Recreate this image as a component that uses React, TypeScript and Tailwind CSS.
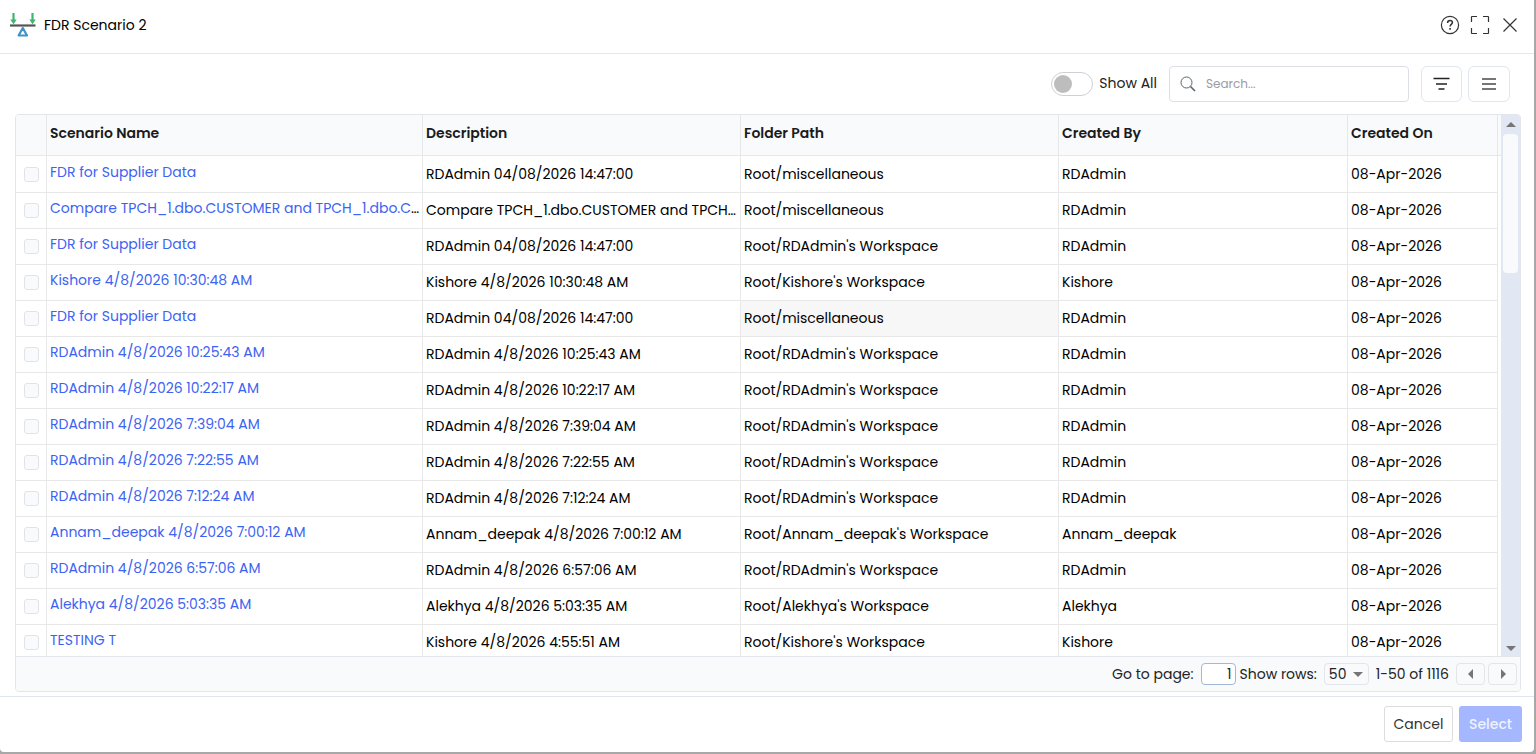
import { useState } from "react";

type Row = {
  name: string;
  description: string;
  folder: string;
  createdBy: string;
};

const compare = "Compare TPCH_1.dbo.CUSTOMER and TPCH_1.dbo.CUSTOMER_COPY";

const rows: Row[] = [
  { name: "FDR for Supplier Data", description: "RDAdmin 04/08/2026 14:47:00", folder: "Root/miscellaneous", createdBy: "RDAdmin" },
  { name: compare, description: compare, folder: "Root/miscellaneous", createdBy: "RDAdmin" },
  { name: "FDR for Supplier Data", description: "RDAdmin 04/08/2026 14:47:00", folder: "Root/RDAdmin's Workspace", createdBy: "RDAdmin" },
  { name: "Kishore 4/8/2026 10:30:48 AM", description: "Kishore 4/8/2026 10:30:48 AM", folder: "Root/Kishore's Workspace", createdBy: "Kishore" },
  { name: "FDR for Supplier Data", description: "RDAdmin 04/08/2026 14:47:00", folder: "Root/miscellaneous", createdBy: "RDAdmin" },
  { name: "RDAdmin 4/8/2026 10:25:43 AM", description: "RDAdmin 4/8/2026 10:25:43 AM", folder: "Root/RDAdmin's Workspace", createdBy: "RDAdmin" },
  { name: "RDAdmin 4/8/2026 10:22:17 AM", description: "RDAdmin 4/8/2026 10:22:17 AM", folder: "Root/RDAdmin's Workspace", createdBy: "RDAdmin" },
  { name: "RDAdmin 4/8/2026 7:39:04 AM", description: "RDAdmin 4/8/2026 7:39:04 AM", folder: "Root/RDAdmin's Workspace", createdBy: "RDAdmin" },
  { name: "RDAdmin 4/8/2026 7:22:55 AM", description: "RDAdmin 4/8/2026 7:22:55 AM", folder: "Root/RDAdmin's Workspace", createdBy: "RDAdmin" },
  { name: "RDAdmin 4/8/2026 7:12:24 AM", description: "RDAdmin 4/8/2026 7:12:24 AM", folder: "Root/RDAdmin's Workspace", createdBy: "RDAdmin" },
  { name: "Annam_deepak 4/8/2026 7:00:12 AM", description: "Annam_deepak 4/8/2026 7:00:12 AM", folder: "Root/Annam_deepak's Workspace", createdBy: "Annam_deepak" },
  { name: "RDAdmin 4/8/2026 6:57:06 AM", description: "RDAdmin 4/8/2026 6:57:06 AM", folder: "Root/RDAdmin's Workspace", createdBy: "RDAdmin" },
  { name: "Alekhya 4/8/2026 5:03:35 AM", description: "Alekhya 4/8/2026 5:03:35 AM", folder: "Root/Alekhya's Workspace", createdBy: "Alekhya" },
  { name: "TESTING T", description: "Kishore 4/8/2026 4:55:51 AM", folder: "Root/Kishore's Workspace", createdBy: "Kishore" },
];

const headCell = "h-10 border-b border-r border-[#e5e7eb] bg-[#f8fafc] px-[3px] pb-1 text-left font-semibold text-[#1b1b1b]";
const cell = "truncate border-b border-r border-[#e8e8e8] pl-[3px] text-black";
const bodyCell = `${cell} pr-[3px] pb-0.5`;

function BalanceLogo() {
  return (
    <svg width="26" height="26" viewBox="0 0 26 26" fill="none" aria-hidden="true">
      <path d="M3.500 1v8M22.500 1v8" stroke="#3fb56f" strokeWidth="2.200" />
      <path d="M.3 7.500 3.500 12.300l3.200-4.800zM19.300 7.500l3.200 4.800 3.200-4.800z" fill="#3fb56f" />
      <path d="M0 13.500h25.500" stroke="#555" strokeWidth="2.200" />
      <path d="M12.800 16 17 23.500H8.600z" stroke="#3f93c9" strokeWidth="2.200" strokeLinejoin="round" />
    </svg>
  );
}

function HelpIcon() {
  return (
    <svg width="20" height="20" viewBox="0 0 20 20" fill="none" stroke="#333" aria-hidden="true">
      <circle cx="10" cy="10" r="8.600" strokeWidth="1.200" />
      <path d="M7.600 7.900C7.600 6.300 8.600 5.500 10 5.500s2.400.9 2.400 2.100c0 1.800-2.300 1.900-2.300 4" strokeWidth="1.500" />
      <path d="M10.100 13v1.700" strokeWidth="1.600" />
    </svg>
  );
}

function ExpandIcon() {
  return (
    <svg width="20" height="20" viewBox="0 0 20 20" fill="none" stroke="#333" strokeWidth="1.200" aria-hidden="true">
      <path d="M1.500 7V2q0-.5.5-.5h5M13 1.500h5q.5 0 .5.5v5M18.500 13v5q0 .5-.5.5h-5M7 18.500H2q-.5 0-.5-.5v-5" />
    </svg>
  );
}

function CloseIcon() {
  return (
    <svg width="20" height="20" viewBox="0 0 20 20" fill="none" stroke="#333" strokeWidth="1.200" aria-hidden="true">
      <path d="m3.500 3.500 13 13M16.500 3.500l-13 13" />
    </svg>
  );
}

function Triangle({ dir }: { dir: "up" | "down" | "left" | "right" }) {
  const d = {
    up: "M0 7 5 2l5 5z",
    down: "M0 3h10L5 8z",
    left: "M7 0v10L2 5z",
    right: "M3 0v10l5-5z",
  }[dir];
  return (
    <svg width="10" height="10" viewBox="0 0 10 10" fill="#757575" aria-hidden="true">
      <path d={d} />
    </svg>
  );
}

export default function App() {
  const [showAll, setShowAll] = useState(false);

  return (
    <div className="h-screen overflow-hidden bg-[#a8a8a8] pr-0.5 pb-0.5 font-[Poppins,Inter,sans-serif] text-sm text-[#222]">
      <div role="dialog" aria-labelledby="dialog-title" className="flex h-full flex-col rounded-b bg-white">
        <header className="flex h-[54px] shrink-0 items-center justify-between border-b border-[#e5e7eb] pr-3.5 pb-1 pl-[10px]">
          <div className="flex items-center gap-2">
            <BalanceLogo />
            <h1 id="dialog-title" className="text-black">FDR Scenario 2</h1>
          </div>
          <div className="flex items-center gap-[10px]">
            <button type="button" aria-label="Help"><HelpIcon /></button>
            <button type="button" aria-label="Full screen"><ExpandIcon /></button>
            <button type="button" aria-label="Close"><CloseIcon /></button>
          </div>
        </header>

        <main className="flex min-h-0 flex-1 flex-col pr-[13px] pb-1 pl-[15px]">
          <div className="flex h-[60px] shrink-0 items-center justify-end pr-[11px]">
            <label className="flex items-center gap-1.5">
              <input
                type="checkbox"
                role="switch"
                checked={showAll}
                onChange={(e) => setShowAll(e.target.checked)}
                className="flex h-6 w-[42px] appearance-none items-center rounded-full border border-[#cfcfd6] bg-white px-0.5 before:size-[18px] before:rounded-full before:bg-[#bdbdbd] checked:justify-end"
              />
              <span className="pb-0.5">Show All</span>
            </label>
            <div className="ml-3 flex h-9 w-60 items-center gap-2.5 rounded border border-[#dcdfe6] px-2.5">
              <svg width="16" height="16" viewBox="0 0 16 16" fill="none" stroke="#59636b" aria-hidden="true">
                <circle cx="6.500" cy="6.500" r="5.500" strokeWidth="1" />
                <path d="m10.500 10.500 4.500 4.500" strokeWidth="1.600" />
              </svg>
              <input
                type="text"
                aria-label="Search"
                placeholder="Search..."
                className="min-w-0 flex-1 text-xs outline-none placeholder:text-[#9b9ba5]"
              />
            </div>
            <button type="button" aria-label="Filter" className="ml-3 flex h-9 w-[41px] items-center justify-center rounded-md border border-[#e1e6f0]">
              <svg width="17" height="14" viewBox="0 0 17 14" stroke="#222" strokeWidth="1.500" aria-hidden="true">
                <path d="M.5 1.500h16M3 7h11M5.500 12h6" />
              </svg>
            </button>
            <button type="button" aria-label="Menu" className="ml-1.5 flex h-9 w-[42px] items-center justify-center rounded-md border border-[#e1e6f0]">
              <svg width="14" height="14" viewBox="0 0 14 14" stroke="#767676" strokeWidth="2" aria-hidden="true">
                <path d="M0 2h14M0 7h14M0 12h14" />
              </svg>
            </button>
          </div>

          <section className="flex min-h-0 flex-1 flex-col overflow-hidden rounded border border-[#e2e5ea]">
            <div className="flex min-h-0 flex-1">
              <div className="min-w-0 flex-1 overflow-hidden">
                <table className="w-full table-fixed border-separate border-spacing-0">
                  <colgroup>
                    <col className="w-[31px]" />
                    <col className="w-[376px]" />
                    <col className="w-[318px]" />
                    <col className="w-[318px]" />
                    <col className="w-[289px]" />
                    <col className="w-[150px]" />
                  </colgroup>
                  <thead>
                    <tr className="h-[41px]">
                      <td className={headCell} />
                      <th scope="col" className={headCell}>Scenario Name</th>
                      <th scope="col" className={headCell}>Description</th>
                      <th scope="col" className={headCell}>Folder Path</th>
                      <th scope="col" className={headCell}>Created By</th>
                      <th scope="col" className={headCell}>Created On</th>
                    </tr>
                  </thead>
                  <tbody>
                    {rows.map((row, i) => (
                      <tr key={i} className="h-9 first:h-[37px] first:*:pt-px">
                        <td className="border-r border-b border-[#e8e8e8]">
                          <input
                            type="checkbox"
                            aria-label={`Select ${row.name}`}
                            className="mx-auto block size-[15px] appearance-none rounded-[3px] border border-[#e1e3ea] bg-[#f8fafc] checked:bg-[#3f66f5]"
                          />
                        </td>
                        <td className={`${cell} pb-1.5`}>
                          <a href="#" className="text-[#3d63f2]">{row.name}</a>
                        </td>
                        <td className={bodyCell}>{row.description}</td>
                        <td className={i === 4 ? `${bodyCell} bg-[#f7f7f7]` : bodyCell}>{row.folder}</td>
                        <td className={bodyCell}>{row.createdBy}</td>
                        <td className={bodyCell}>08-Apr-2026</td>
                      </tr>
                    ))}
                  </tbody>
                </table>
              </div>
              <div className="w-[3px] shrink-0 bg-white">
                <div className="h-[41px] border-b border-[#e5e7eb] bg-[#f8fafc]" />
              </div>
              <div className="flex w-[19px] shrink-0 flex-col items-center bg-[#e1e7f3]">
                <div className="flex h-[19px] items-center"><Triangle dir="up" /></div>
                <div className="h-[139px] w-[15px] rounded-sm bg-[#f8fafc]" />
                <div className="mt-auto flex h-4 items-center"><Triangle dir="down" /></div>
              </div>
            </div>

            <div className="flex h-[35px] shrink-0 items-center justify-end border-t border-[#e2e5ea] bg-[#f8fafc] pr-[3px]">
              <label className="flex items-center gap-[7px]">
                Go to page:
                <input type="text" defaultValue="1" className="h-[22px] w-[35px] rounded-sm border border-[#a3b8d4] bg-white px-[3px] text-right" />
              </label>
              <label className="ml-1 flex items-center gap-[7px]">
                Show rows:
                <span className="grid h-[22px] w-[45px] grid-cols-[1fr_auto] items-center rounded-sm border border-[#e2e5ea] pr-[5px]">
                  <select defaultValue="50" className="col-span-2 col-start-1 row-start-1 w-full appearance-none pl-1 outline-none">
                    <option>50</option>
                    <option>100</option>
                  </select>
                  <span className="pointer-events-none col-start-2 row-start-1"><Triangle dir="down" /></span>
                </span>
              </label>
              <span className="ml-[7px]">1-50 of 1116</span>
              <button type="button" aria-label="Previous page" className="ml-[7px] flex h-[22px] w-[29px] items-center justify-center rounded-sm border border-[#e2e5ea]">
                <Triangle dir="left" />
              </button>
              <button type="button" aria-label="Next page" className="ml-[3px] flex h-[22px] w-[29px] items-center justify-center rounded-sm border border-[#e2e5ea]">
                <Triangle dir="right" />
              </button>
            </div>
          </section>
        </main>

        <footer className="flex h-14 shrink-0 items-center justify-end gap-1.5 border-t border-[#e1e6ee] pr-3 pb-0.5">
          <button type="button" className="h-9 w-[69px] rounded-[3px] border border-[#dcdcdc] text-[#333]">Cancel</button>
          <button type="button" disabled className="h-9 w-[63px] rounded-[3px] bg-[#a5b8ff] font-medium text-[#eef2ff]">Select</button>
        </footer>
      </div>
    </div>
  );
}
